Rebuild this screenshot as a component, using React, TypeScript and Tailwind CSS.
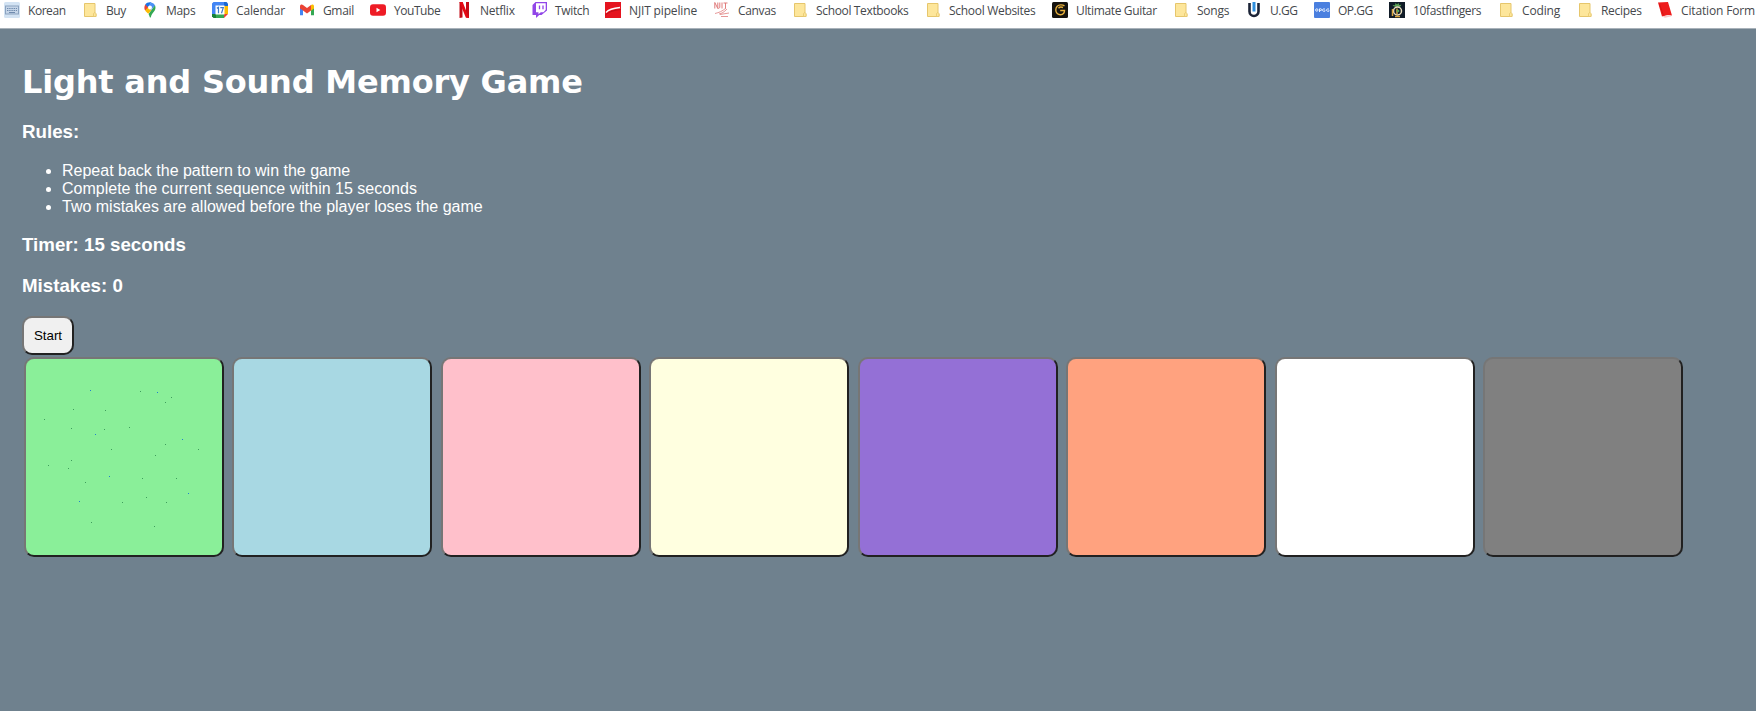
import React from "react";

function Folder() {
  return (
    <svg width="16" height="16" viewBox="0 0 16 16">
      <path d="M2.5 1.5h10.5v9.5l1 1v2.5H2.5z" fill="#fde69b" stroke="#e6c66c" />
      <path d="M11.5 14.5v-3l1.5-1 1 1v3z" fill="#fde69b" stroke="#e6c66c" strokeWidth=".8" />
    </svg>
  );
}

function Keyboard() {
  return (
    <svg width="16" height="16" viewBox="0 0 16 16">
      <rect width="16" height="16" rx="1.5" fill="#d3e3f3" />
      <rect x="1.5" y="4" width="13" height="8" fill="#c5d5e8" stroke="#8ba3c0" />
      <path d="M3 6.5h10M3 8.5h10" stroke="#6f8bae" strokeDasharray="1.4 .8" />
      <path d="M5 10.5h6" stroke="#6f8bae" />
    </svg>
  );
}

function MapsPin() {
  return (
    <svg width="16" height="16" viewBox="0 0 16 16">
      <path d="M3.2 8.6C2 6.800 2 4 3.600 2.200L8 6z" fill="#ea4335" />
      <path d="M3.300 2.500C4.500.8 6.800 0 9.300.5L6 5.200z" fill="#1a73e8" />
      <path d="M9 .4c2 .4 3.300 1.500 4.100 3L8.800 8.200 6.200 5z" fill="#4a90f5" />
      <path d="M13 3.200c1 2.500.4 4.500-1 6.400C10.200 12 9.400 13 8.900 15c-.2.800-1 .8-1.200 0-.3-1-.6-2-1.200-3z" fill="#34a853" />
      <path d="M3.200 8.500l3-3.500 3 3.300-3 3.500C5.300 10.600 4 9.800 3.200 8.500z" fill="#fbbc04" />
      <circle cx="8" cy="5.500" r="2" fill="#fff" />
    </svg>
  );
}

function CalendarIcon() {
  return (
    <svg width="16" height="16" viewBox="0 0 16 16">
      <path d="M1.500 0h10.500v4H4v8H0V1.500z" fill="#4285f4" />
      <path d="M12 0h2.500L16 1.500V4h-4z" fill="#1967d2" />
      <path d="M12 4h4v8h-4z" fill="#fbbc04" />
      <path d="M4 12h8v4H4z" fill="#34a853" />
      <path d="M0 12h4v4H1.500L0 14.500z" fill="#188038" />
      <path d="M12 12h4l-4 4z" fill="#ea4335" />
      <path d="M3.500 3.500h9v9h-9z" fill="#fff" />
      <path d="M4.800 6.200 6.500 5.200v6M8.300 5.700h3L9.500 11.200" fill="none" stroke="#3b78c8" strokeWidth="1.200" />
    </svg>
  );
}

function GmailIcon() {
  return (
    <svg width="16" height="16" viewBox="0 0 16 16">
      <path d="M1 4v9.300h3V7z" fill="#4285f4" />
      <path d="M12 7v6.300h3V4z" fill="#34a853" />
      <path d="M1 4.300C1 2.300 3 2 4 3l4 3 4-3v5.500l-4 3-4-3L1 6.500z" fill="#ea4335" />
      <path d="M12 3c1.300-1 3-.5 3 1.300v2.200l-3 2.200z" fill="#fbbc04" />
    </svg>
  );
}

function YouTubeIcon() {
  return (
    <svg width="16" height="16" viewBox="0 0 16 16">
      <rect y="2.300" width="16" height="11.400" rx="3" fill="#ee1c25" />
      <path d="M6.500 5.800v4.400L10.300 8z" fill="#fff" />
    </svg>
  );
}

function NetflixIcon() {
  return (
    <svg width="16" height="16" viewBox="0 0 16 16">
      <path d="M3.500 0h3v15.500l-3 .5zM10 0h3v16l-3-.5z" fill="#c40b16" />
      <path d="M3.500 0h3.200L13 16l-3.200-.5z" fill="#e50914" />
    </svg>
  );
}

function TwitchIcon() {
  return (
    <svg width="16" height="16" viewBox="0 0 16 16">
      <path d="M4.500 0H16v8.500L10.500 13H8.200L5 16v-3H1.500V3z" fill="#9146e8" />
      <path d="M5 1.300h9.700v6.500l-2.200 2.400H9.800l-2.300 2v-2H5z" fill="#fff" />
      <path d="M8.500 3.500v3.800M12 3.500v3.800" stroke="#9146e8" strokeWidth="1.300" />
    </svg>
  );
}

function PipelineIcon() {
  return (
    <svg width="16" height="16" viewBox="0 0 16 16">
      <rect width="16" height="16" fill="#e5141f" />
      <path d="M1 10.500C4 7 8 6.200 15 5.500" fill="none" stroke="#fff" strokeWidth="1.300" />
      <path d="M0 13.500C4 9.500 9 8.200 16 7.500" fill="none" stroke="#b30d18" strokeWidth=".8" />
    </svg>
  );
}

function CanvasIcon() {
  return (
    <svg width="16" height="16" viewBox="0 0 16 16" fill="none" stroke="#e07c7c">
      <path d="M.8 6.500V.5l3 6V.5M5.800.5v5l-1.500 1M8 .5v6M9.500 1h4M11.500 1v5.500" />
      <path d="M1 11.500c4-1 7-2 11-5.500M5 12c3-.5 5-2 8-5M6 12.500l9-1.500M7 14.500h7" strokeWidth=".8" />
    </svg>
  );
}

function GuitarIcon() {
  return (
    <svg width="16" height="16" viewBox="0 0 16 16">
      <rect width="16" height="16" rx="1.500" fill="#15130f" />
      <path d="M12.500 3.800C10.500 2.500 7 2.500 5.200 4.200c-2 2-1.800 5.500 0 7.300 1.800 1.800 5 1.700 6.500-.2.700-1 .8-1.800.8-2.800H8.200M11 5.500C9.500 4.800 7.500 5 6.500 6.200" fill="none" stroke="#e8b13c" strokeWidth="1.400" />
    </svg>
  );
}

function UggIcon() {
  return (
    <svg width="16" height="16" viewBox="0 0 16 16">
      <path d="M3.500 1v8.500a4.500 4.500 0 0 0 9 0V1" fill="none" stroke="#1b2336" strokeWidth="2.600" />
      <path d="M8 0v9.500" stroke="#2f8fdd" strokeWidth="3" />
    </svg>
  );
}

function OpggIcon() {
  return (
    <svg width="16" height="16" viewBox="0 0 16 16">
      <rect width="16" height="16" rx="1" fill="#4a7fdf" />
      <g fill="none" stroke="#e9f1ff" strokeWidth="1">
        <circle cx="2.800" cy="8" r="1.200" />
        <path d="M5.500 10V6.800h1.300c1.200 0 1.200 1.700 0 1.700H5.500M11 7H9.300c-1 0-1 2.200 0 2.200H11V8.300M15 7h-1.700c-1 0-1 2.200 0 2.200H15V8.300" />
      </g>
    </svg>
  );
}

function FingersIcon() {
  return (
    <svg width="16" height="16" viewBox="0 0 16 16">
      <rect width="16" height="16" fill="#111c28" />
      <path d="M5 4.500 3.500 3l2.500.3L6.500 1 8 2.500 9.500 1l.7 2 2.300-.3L11 4.800z" fill="#5ba356" />
      <circle cx="8.500" cy="9" r="4" fill="none" stroke="#eadfc0" strokeWidth="1.500" />
      <path d="M3.500 7v7M8 6.500v6M6 14.500h5" stroke="#d9a53f" strokeWidth="1.500" />
      <circle cx="9" cy="9" r="1.300" fill="#5ba356" />
    </svg>
  );
}

function CitationIcon() {
  return (
    <svg width="16" height="16" viewBox="0 0 16 16">
      <path d="M1 .5 11 0l4 13.500-4-.5-6 1.500z" fill="#ee1c1c" />
      <path d="M5 14.500l6.500-1.200 3.200.9L8 15.700z" fill="#f6caca" />
      <path d="M2.500 2l3.800 11" stroke="#c91212" strokeWidth=".7" />
    </svg>
  );
}

type Bookmark = { label: string; icon: () => React.ReactElement; width: string; tracking: string };

const bookmarks: Bookmark[] = [
  { label: "Korean", icon: Keyboard, width: "w-[78px]", tracking: "tracking-[-0.45px]" },
  { label: "Buy", icon: Folder, width: "w-[60px]", tracking: "tracking-[-0.4px]" },
  { label: "Maps", icon: MapsPin, width: "w-[70px]", tracking: "tracking-[-0.3px]" },
  { label: "Calendar", icon: CalendarIcon, width: "w-[87px]", tracking: "tracking-[-0.15px]" },
  { label: "Gmail", icon: GmailIcon, width: "w-[71px]", tracking: "tracking-[-0.35px]" },
  { label: "YouTube", icon: YouTubeIcon, width: "w-[86px]", tracking: "tracking-[-0.45px]" },
  { label: "Netflix", icon: NetflixIcon, width: "w-[75px]", tracking: "tracking-[-0.25px]" },
  { label: "Twitch", icon: TwitchIcon, width: "w-[74px]", tracking: "tracking-[-0.35px]" },
  { label: "NJIT pipeline", icon: PipelineIcon, width: "w-[109px]", tracking: "tracking-[-0.15px]" },
  { label: "Canvas", icon: CanvasIcon, width: "w-[78px]", tracking: "tracking-[-0.35px]" },
  { label: "School Textbooks", icon: Folder, width: "w-[133px]", tracking: "tracking-[-0.35px]" },
  { label: "School Websites", icon: Folder, width: "w-[127px]", tracking: "tracking-[-0.3px]" },
  { label: "Ultimate Guitar", icon: GuitarIcon, width: "w-[121px]", tracking: "tracking-[-0.35px]" },
  { label: "Songs", icon: Folder, width: "w-[73px]", tracking: "tracking-[-0.25px]" },
  { label: "U.GG", icon: UggIcon, width: "w-[68px]", tracking: "tracking-[-0.5px]" },
  { label: "OP.GG", icon: OpggIcon, width: "w-[75px]", tracking: "tracking-[-0.5px]" },
  { label: "10fastfingers", icon: FingersIcon, width: "w-[109px]", tracking: "tracking-[-0.35px]" },
  { label: "Coding", icon: Folder, width: "w-[79px]", tracking: "tracking-[-0.15px]" },
  { label: "Recipes", icon: Folder, width: "w-[80px]", tracking: "tracking-[-0.3px]" },
  { label: "Citation Form", icon: CitationIcon, width: "w-[98px]", tracking: "tracking-[-0.15px]" },
];

const tiles = [
  "bg-[#8aef99]",
  "bg-[#a8d8e3]",
  "bg-[#ffc0cb]",
  "bg-[#ffffe0]",
  "bg-[#9470d6]",
  "bg-[#ffa27f]",
  "bg-white",
  "bg-[#808080]",
];

const blueSpecks = [[64, 31], [131, 33], [69, 75], [156, 80], [83, 117], [162, 134], [53, 142]];
const greenSpecks = [
  [114, 32], [145, 38], [139, 43], [47, 50], [79, 51], [18, 60], [45, 69], [78, 70], [103, 68],
  [139, 85], [85, 90], [172, 90], [129, 96], [45, 101], [22, 106], [42, 109], [59, 123], [116, 119],
  [150, 119], [120, 138], [96, 143], [140, 143], [65, 163], [128, 167],
];

function Specks() {
  return (
    <svg width="196" height="196" viewBox="0 0 196 196" className="block" shapeRendering="crispEdges">
      {blueSpecks.map(([x, y]) => (
        <rect key={`${x}-${y}`} x={x} y={y} width="1" height="1" fill="#1f7fd0" />
      ))}
      {greenSpecks.map(([x, y]) => (
        <rect key={`${x}-${y}`} x={x} y={y} width="1" height="1" fill="#3f9d5c" />
      ))}
    </svg>
  );
}

const bevel =
  "rounded-[10px] border-2 border-t-[#767676] border-l-[#767676] border-r-[#212121] border-b-[#212121]";

export default function App() {
  return (
    <div className="h-[711px] w-[1756px] overflow-hidden bg-[#6f818e] font-['Liberation_Sans',Arial,sans-serif] text-white">
      <nav className="flex h-[29px] border-b border-[#a9b2ba] bg-white pl-1 pt-0.5 font-['Open_Sans','Noto_Sans',sans-serif] text-[12px] text-[#45484c]">
        {bookmarks.map(({ label, icon: Icon, width, tracking }) => (
          <a key={label} className={`flex h-4 shrink-0 items-start gap-2 whitespace-nowrap ${width}`}>
            <Icon />
            <span className={`leading-[17px] ${tracking}`}>{label}</span>
          </a>
        ))}
      </nav>
      <main className="pl-[22px] pt-[34px]">
        <h1 className="whitespace-nowrap font-['DejaVu_Sans',sans-serif] text-[32px] font-bold leading-[38px] tracking-[-0.2px]">
          Light and Sound Memory Game
        </h1>
        <h3 className="mt-5 text-[18.72px] font-bold leading-[22px]">Rules:</h3>
        <ul className="mt-[19px] list-disc pl-10 text-[16px] leading-[18px]">
          <li>Repeat back the pattern to win the game</li>
          <li>Complete the current sequence within 15 seconds</li>
          <li>Two mistakes are allowed before the player loses the game</li>
        </ul>
        <h3 className="mt-[18px] text-[18.72px] font-bold leading-[22px]">Timer: 15 seconds</h3>
        <h3 className="mt-[19px] text-[18.72px] font-bold leading-[22px]">Mistakes: 0</h3>
        <button className={`mt-[19px] block h-[39px] w-[52px] bg-[#f0f0f0] text-[13.33px] leading-[15px] text-black ${bevel}`}>
          Start
        </button>
        <div className="mt-0.5 flex gap-[8.45px] pl-0.5">
          {tiles.map((color, i) => (
            <button key={color} className={`size-[200px] shrink-0 ${color} ${bevel}`}>
              {i === 0 && <Specks />}
            </button>
          ))}
        </div>
      </main>
    </div>
  );
}
